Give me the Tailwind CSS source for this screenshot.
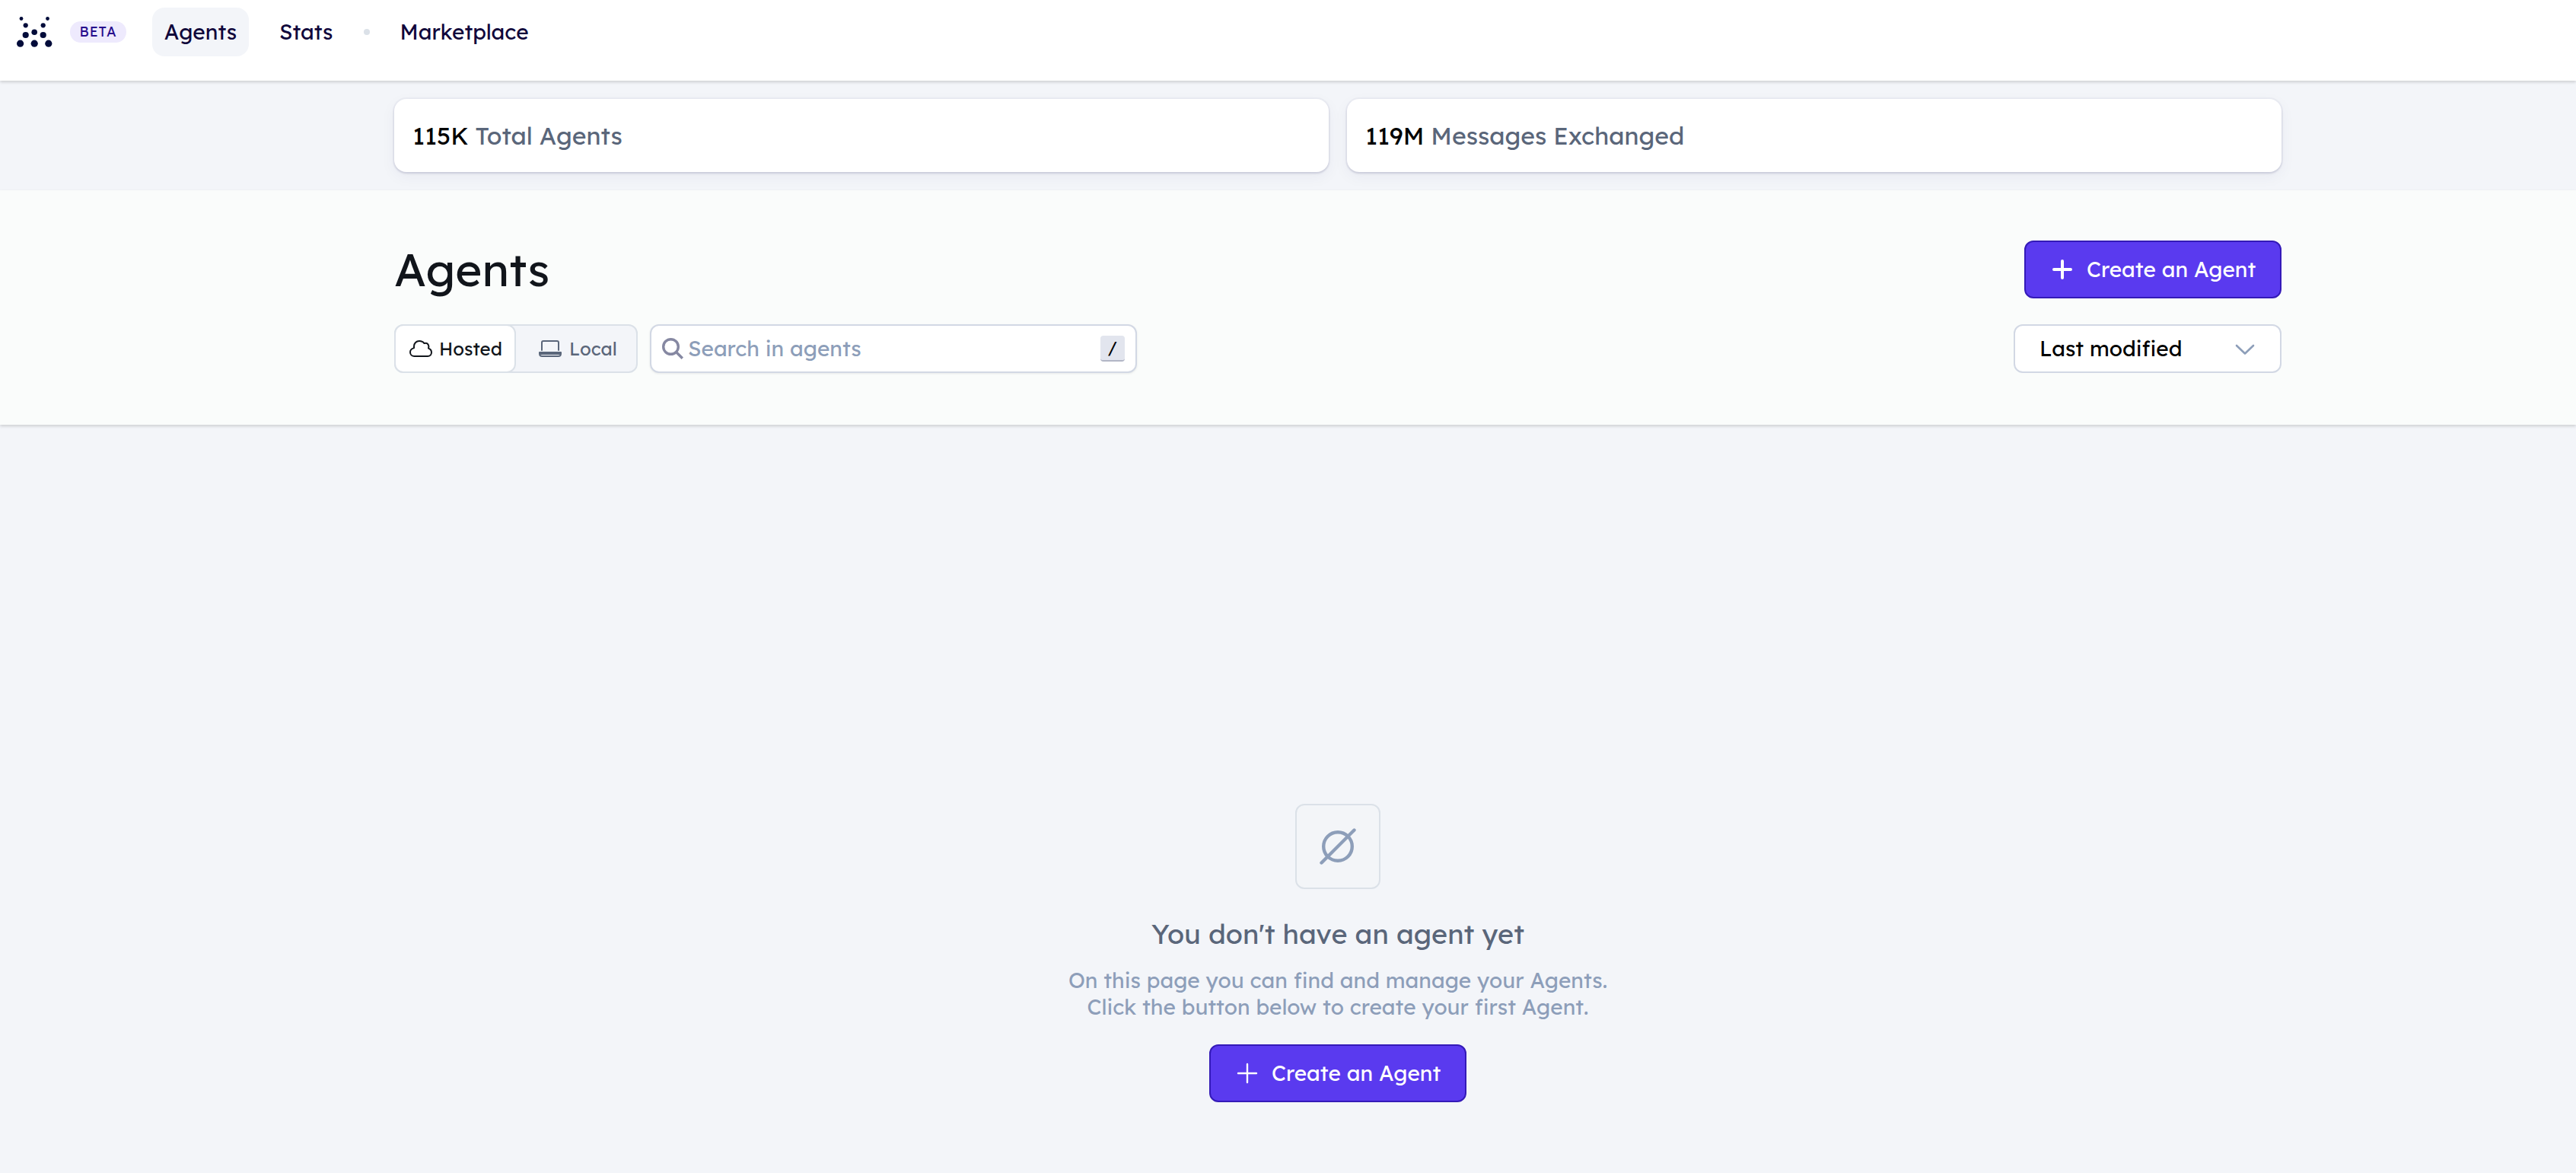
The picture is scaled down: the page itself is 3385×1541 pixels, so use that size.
<!DOCTYPE html>
<html lang="en">
<head>
<meta charset="utf-8">
<meta name="viewport" content="width=device-width, initial-scale=1">
<title>Agents</title>
<script src="https://cdn.jsdelivr.net/npm/@tailwindcss/browser@4"></script>
</head>
<body class="flex min-h-screen flex-col bg-[#f3f5f9] font-['Lexend','Inter',sans-serif] text-[28px] leading-[36px] font-normal text-black">

<header class="relative z-10 flex h-[106px] items-start bg-white pt-[10px] pl-[22px] shadow-[0_2px_4px_rgba(0,0,0,0.16)]">
  <div class="flex h-16 items-center">
    <a href="#" aria-label="Home">
      <svg class="block h-10 w-[47px]" viewBox="0 0 47 40" fill="#020c3a" aria-hidden="true">
        <circle cx="6" cy="2.5" r="2.4"/><circle cx="40.500" cy="2.500" r="2.4"/>
        <circle cx="11.700" cy="11.300" r="3.100"/><circle cx="34.700" cy="11.300" r="3.100"/>
        <circle cx="23.200" cy="20.200" r="3.800"/>
        <circle cx="11.700" cy="24" r="4.100"/><circle cx="34.700" cy="24" r="4.100"/>
        <circle cx="4.600" cy="35.200" r="4.600"/><circle cx="23.200" cy="35.200" r="4.600"/><circle cx="41.800" cy="35.200" r="4.600"/>
      </svg>
    </a>
    <span class="ml-[23px] flex h-7 w-[74px] items-center justify-center rounded-full bg-[#eeeafd] text-[18px] tracking-wider text-[#260c8c]">BETA</span>
  </div>
  <nav class="ml-[34px] flex h-16 items-center text-[#10063b]">
    <a href="#" class="flex h-16 w-[127px] items-center justify-center rounded-2xl bg-[#f3f5f9]">Agents</a>
    <a href="#" class="ml-10">Stats</a>
    <span class="mx-10 size-2 rounded-full bg-[#dbe1e8]"></span>
    <a href="#">Marketplace</a>
  </nav>
</header>

<section class="py-6 pr-4 pl-[147px]">
  <div class="mx-auto grid max-w-[2480px] grid-cols-2 gap-6 text-[32px] text-[#5a667a]">
    <p class="flex h-24 items-center rounded-2xl bg-white px-6 shadow-[0_0_0_2px_rgba(40,40,100,0.04),0_2px_3px_rgba(40,40,100,0.14),0_6px_20px_rgba(40,40,100,0.05)]"><span><span class="text-black">115K</span> Total Agents</span></p>
    <p class="flex h-24 items-center rounded-2xl bg-white px-6 shadow-[0_0_0_2px_rgba(40,40,100,0.04),0_2px_3px_rgba(40,40,100,0.14),0_6px_20px_rgba(40,40,100,0.05)]"><span><span class="text-black">119M</span> Messages Exchanged</span></p>
  </div>
</section>

<section class="bg-[#fafcfb] pt-[66px] pr-4 pb-[68px] pl-[147px] shadow-[0_2px_4px_rgba(0,0,0,0.16)]">
  <div class="mx-auto max-w-[2480px]">
    <div class="flex h-[76px] items-center justify-between">
      <h1 class="text-[60px] leading-[76px] text-[#11151b]">Agents</h1>
      <button type="button" class="flex h-[76px] w-[338px] items-center rounded-xl border-2 border-[#341ab8] bg-[#5a3aef] pl-[34px] text-white">
        <svg class="size-7" viewBox="0 0 28 28" fill="none" stroke="currentColor" stroke-width="4" stroke-linecap="round" aria-hidden="true"><path d="M14 3v22M3 14h22"/></svg>
        <span class="ml-[18px]">Create an Agent</span>
      </button>
    </div>
    <div class="mt-[34px] flex h-16 items-center">
      <div class="flex h-16 w-80 rounded-xl border-2 border-[#dbe1e8] bg-[#f3f5f9] text-[24px]">
        <button type="button" class="-my-[2px] -ml-[2px] flex w-40 items-center rounded-xl border-2 border-[#dbe1e8] bg-white pl-[18px] text-[#11151b]">
          <svg class="h-[22px] w-[30px]" viewBox="0 0 30 22" fill="none" stroke="currentColor" stroke-width="2" stroke-linejoin="round" aria-hidden="true"><path d="M6.500 21h17.500c3 0 5-2.300 5-5.100 0-2.700-1.700-4.500-4-5.300.6-1.700.5-3.500-.4-5-1.200-1.900-3.300-2.200-5.100-1.500C18.300 2.200 15.600 1 12.900 1 9 1 6 4 6 7.900v2.200C3 10.900 1 12.900 1 15.700 1 18.800 3.500 21 6.500 21z"/></svg>
          <span class="ml-[9px]">Hosted</span>
        </button>
        <button type="button" class="flex flex-1 items-center pl-[30px] text-[#5a667a]">
          <svg class="h-[22px] w-[30px]" viewBox="0 0 30 22" fill="none" stroke="currentColor" stroke-width="2" stroke-linejoin="round" stroke-linecap="round" aria-hidden="true"><path d="M4 13V3q0-2 2-2h18q2 0 2 2v10M1 16h28v1.500q0 3.500-3.500 3.500h-21Q1 21 1 17.500zM2 18h26"/></svg>
          <span class="ml-[10px]">Local</span>
        </button>
      </div>
      <label class="ml-4 flex h-16 w-[640px] items-center rounded-xl border-2 border-[#d2d8e4] bg-white pr-[14px] pl-[14px] shadow-[0_1px_3px_rgba(0,0,0,0.08)]">
        <svg class="size-7 shrink-0" viewBox="0 0 28 28" fill="none" stroke="#8688a2" stroke-width="3.400" aria-hidden="true"><circle cx="11.500" cy="11.500" r="9.800"/><path d="M18.500 18.500l8.300 8.300"/></svg>
        <input type="text" aria-label="Search in agents" placeholder="Search in agents" class="ml-[6px] min-w-0 flex-1 outline-none placeholder:text-[#8d9eb9]">
        <kbd class="flex h-[34px] w-8 items-center justify-center rounded-[4px] border-b-2 border-[#b2b6c6] bg-[#e2e5ee] font-['Lexend','Inter',sans-serif] text-[22px] leading-[30px]">/</kbd>
      </label>
      <div class="relative ml-auto">
        <select aria-label="Sort by" class="h-16 w-[352px] appearance-none rounded-xl border-2 border-[#d2d8e4] bg-white pl-8">
          <option>Last modified</option>
        </select>
        <svg class="pointer-events-none absolute top-[26px] right-[35px] h-[15px] w-[26px]" viewBox="0 0 26 15" fill="none" stroke="#8d9eb9" stroke-width="2.600" stroke-linecap="round" stroke-linejoin="round" aria-hidden="true"><path d="M2 2l11 10.500L24 2"/></svg>
      </div>
    </div>
  </div>
</section>

<main class="flex flex-1 flex-col items-center justify-end pt-24 pb-[93px] pl-[131px] text-center">
  <div class="flex size-28 items-center justify-center rounded-xl border-2 border-[#dbe1e8] bg-[#f3f5f8]">
    <svg class="size-12" viewBox="0 0 48 48" fill="none" stroke="#8d9eb9" stroke-width="4.400" stroke-linecap="round" aria-hidden="true"><circle cx="24" cy="24" r="18.800"/><path d="M2.500 45.500l43-43"/></svg>
  </div>
  <h2 class="mt-9 text-[36px] leading-[46px] text-[#5a667a]">You don't have an agent yet</h2>
  <p class="mt-5 leading-[35px] text-[#8d9eb9]">On this page you can find and manage your Agents.<br>Click the button below to create your first Agent.</p>
  <button type="button" class="mt-8 flex h-[76px] w-[338px] items-center rounded-xl border-2 border-[#341ab8] bg-[#5a3aef] pl-[34px] text-white">
    <svg class="size-7" viewBox="0 0 28 28" fill="none" stroke="currentColor" stroke-width="2.400" stroke-linecap="round" aria-hidden="true"><path d="M14 2v24M2 14h24"/></svg>
    <span class="ml-[18px]">Create an Agent</span>
  </button>
</main>

</body>
</html>
